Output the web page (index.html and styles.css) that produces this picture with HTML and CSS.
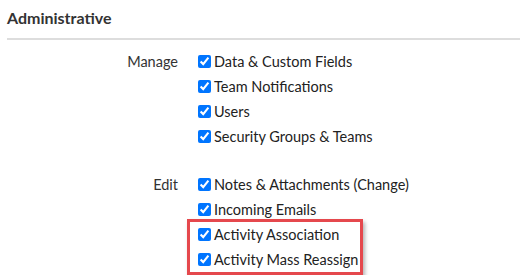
FILE: index.html
```html
<!DOCTYPE html>
<html>
<head>
  <title>Permissions</title>
  <link rel="stylesheet" href="styles.css">
</head>
<body>
  <div class="section">
    <h2 class="section-title">Administrative</h2>
    <div class="perm-grid">
      <div class="perm-label">Manage</div>
      <ul class="perm-list">
        <li><label><input type="checkbox" checked> Data &amp; Custom Fields</label></li>
        <li><label><input type="checkbox" checked> Team Notifications</label></li>
        <li><label><input type="checkbox" checked> Users</label></li>
        <li><label><input type="checkbox" checked> Security Groups &amp; Teams</label></li>
      </ul>

      <div class="perm-label">Edit</div>
      <ul class="perm-list">
        <li><label><input type="checkbox" checked> Notes &amp; Attachments (Change)</label></li>
        <li><label><input type="checkbox" checked> Incoming Emails</label></li>
        <li class="highlight">
          <ul class="perm-list">
            <li><label><input type="checkbox" checked> Activity Association</label></li>
            <li><label><input type="checkbox" checked> Activity Mass Reassign</label></li>
          </ul>
        </li>
      </ul>
    </div>
  </div>
</body>
</html>
```

FILE: styles.css
```css
body {
  font-family: Lato, "Open Sans", sans-serif;
  margin: 0;
  background-color: #fff;
  color: #222;
}
.section {
  padding: 0 0 0 7px;
}
.section-title {
  margin: 0;
  padding: 8px 0 11px 0;
  font-size: 16px;
  font-weight: bold;
  color: #333;
  border-bottom: 2px solid #ddd;
}
.perm-grid {
  display: grid;
  grid-template-columns: 171px 1fr;
  column-gap: 20px;
  row-gap: 23px;
  padding-top: 9px;
}
.perm-label {
  text-align: right;
  font-size: 14.5px;
  color: #333;
  line-height: 25px;
}
.perm-list {
  list-style-type: none;
  margin: 0;
  padding: 0;
}
.perm-list li {
  font-size: 14.5px;
  line-height: 25px;
  height: 25px;
  white-space: nowrap;
}
.perm-list label {
  display: flex;
  align-items: center;
  gap: 3px;
}
.perm-list input {
  margin: 0;
  width: 13px;
  height: 13px;
}
.perm-list .highlight {
  height: auto;
  margin: -3px 0 0 -11px;
  padding: 0 8px 0 8px;
  width: 154px;
  border: 3px solid #e5484d;
  box-shadow: 2px 3px 4px rgba(0, 0, 0, 0.3);
}
```
